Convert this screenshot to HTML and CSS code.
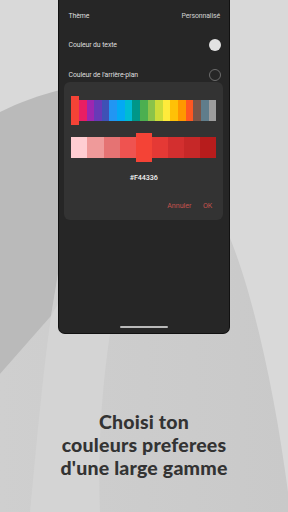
FILE: index.html
```html
<!DOCTYPE html>
<html lang="fr">
<head>
<meta charset="utf-8">
<link rel="stylesheet" href="styles.css">
</head>
<body>
<div class="screen">
  <svg class="backdrop" width="288" height="512" viewBox="0 0 288 512" aria-hidden="true">
    <defs>
      <linearGradient id="mid" x1="0" y1="0" x2="1" y2="0">
        <stop offset="0" stop-color="#cfcfcf"/>
        <stop offset="1" stop-color="#c9c9c9"/>
      </linearGradient>
    </defs>
    <rect width="288" height="512" fill="#d9d9d9"/>
    <path d="M230 238 C 255 300, 276 400, 288 492 L 288 512 L 0 512 L 0 374 L 51 316 L 60 262 L 60 300 L 230 300 Z" fill="url(#mid)"/>
    <path d="M51 316 L 60 300 L 110 334 C 100 400, 98 460, 100 512 L 30 512 C 36 450, 42 380, 51 316 Z" fill="#d4d4d4"/>
    <path d="M0 112 C 20 102, 40 95, 60 90 L 60 262 L 51 316 L 0 374 Z" fill="#bababa"/>
  </svg>

  <div class="phone">
    <div class="row"><span class="label">Thème</span><span class="value">Personnalisé</span></div>
    <div class="row"><span class="label">Couleur du texte</span><span class="dot dot-filled"></span></div>
    <div class="row"><span class="label">Couleur de l'arrière-plan</span><span class="dot dot-empty"></span></div>

    <div class="dialog">
      <div class="strip hues">
        <span class="sw sel" style="background:#F44336"></span>
        <span class="sw" style="background:#E91E63"></span>
        <span class="sw" style="background:#9C27B0"></span>
        <span class="sw" style="background:#673AB7"></span>
        <span class="sw" style="background:#3F51B5"></span>
        <span class="sw" style="background:#2196F3"></span>
        <span class="sw" style="background:#03A9F4"></span>
        <span class="sw" style="background:#00BCD4"></span>
        <span class="sw" style="background:#009688"></span>
        <span class="sw" style="background:#4CAF50"></span>
        <span class="sw" style="background:#8BC34A"></span>
        <span class="sw" style="background:#CDDC39"></span>
        <span class="sw" style="background:#FFEB3B"></span>
        <span class="sw" style="background:#FFC107"></span>
        <span class="sw" style="background:#FF9800"></span>
        <span class="sw" style="background:#FF5722"></span>
        <span class="sw" style="background:#795548"></span>
        <span class="sw" style="background:#607D8B"></span>
        <span class="sw" style="background:#9E9E9E"></span>
      </div>
      <div class="strip shades">
        <span class="sw" style="background:#FFCDD2"></span>
        <span class="sw" style="background:#EF9A9A"></span>
        <span class="sw" style="background:#E57373"></span>
        <span class="sw" style="background:#EF5350"></span>
        <span class="sw sel" style="background:#F44336"></span>
        <span class="sw" style="background:#E53935"></span>
        <span class="sw" style="background:#D32F2F"></span>
        <span class="sw" style="background:#C62828"></span>
        <span class="sw" style="background:#B71C1C"></span>
      </div>
      <div class="hex">#F44336</div>
      <div class="actions"><span class="btn">Annuler</span><span class="btn">OK</span></div>
    </div>

    <div class="home"></div>
  </div>

  <h1 class="caption">Choisi ton<br>couleurs preferees<br>d'une large gamme</h1>
</div>
</body>
</html>
```
FILE: styles.css
```css
* { box-sizing: border-box; }
html, body { margin: 0; padding: 0; }
body { width: 288px; height: 512px; overflow: hidden; background: #d9d9d9; }

.screen {
  position: relative;
  width: 288px;
  height: 512px;
  display: flex;
  flex-direction: column;
}

.backdrop { position: absolute; left: 0; top: 0; z-index: 0; }

.phone {
  position: relative;
  z-index: 1;
  margin-left: 58px;
  width: 172px;
  height: 334px;
  background: #262626;
  border: 1px solid #111111;
  border-top: none;
  border-bottom-width: 1.5px;
  border-radius: 0 0 7px 7px;
  padding: 1px 9px 0 9px;
  display: flex;
  flex-direction: column;
  font-family: Roboto, "Noto Sans", sans-serif;
}

.row {
  height: 29.5px;
  display: flex;
  align-items: center;
  justify-content: space-between;
  padding-left: 0.5px;
}
.label, .value { font-size: 6.9px; color: #dedede; letter-spacing: -0.1px; }
.value { color: #d2d2d2; }

.dot { width: 12px; height: 12px; border-radius: 50%; margin-right: -0.5px; }
.dot-filled { background: #e2e2e2; }
.dot-empty { border: 1px solid #6c6c6c; }

.dialog {
  position: absolute;
  left: 5.3px;
  top: 81.7px;
  width: 159px;
  height: 138.5px;
  background: #333333;
  border-radius: 6px;
  padding: 14.3px 7px 0 7px;
  display: flex;
  flex-direction: column;
}

.strip {
  display: flex;
  align-items: center;
  height: 29px;
}
.strip .sw { flex: 1 1 0; height: 21px; }
.strip .sw.sel { height: 29px; }
.shades { margin-top: 7.7px; height: 29.6px; }
.shades .sw.sel { height: 29.6px; }

.hex {
  margin-top: 10.5px;
  text-align: center;
  font-size: 7.2px;
  font-weight: 500;
  color: #f4f4f4;
  line-height: 9px;
  letter-spacing: -0.1px;
}

.actions {
  margin-top: 19.5px;
  display: flex;
  justify-content: flex-end;
  gap: 11.5px;
  padding-right: 4px;
  font-size: 7.1px;
  color: #c4524d;
  line-height: 9px;
}

.home {
  margin-top: auto;
  margin-bottom: 5.5px;
  align-self: center;
  width: 48px;
  height: 2px;
  border-radius: 1px;
  background: #b9b9b9;
}

.caption {
  position: relative;
  z-index: 1;
  margin: 77px 0 0 0;
  text-align: center;
  font-family: Lato, "Open Sans", sans-serif;
  font-weight: 900;
  font-size: 19.5px;
  line-height: 22.8px;
  color: #333333;
  letter-spacing: 0.2px;
}
```
